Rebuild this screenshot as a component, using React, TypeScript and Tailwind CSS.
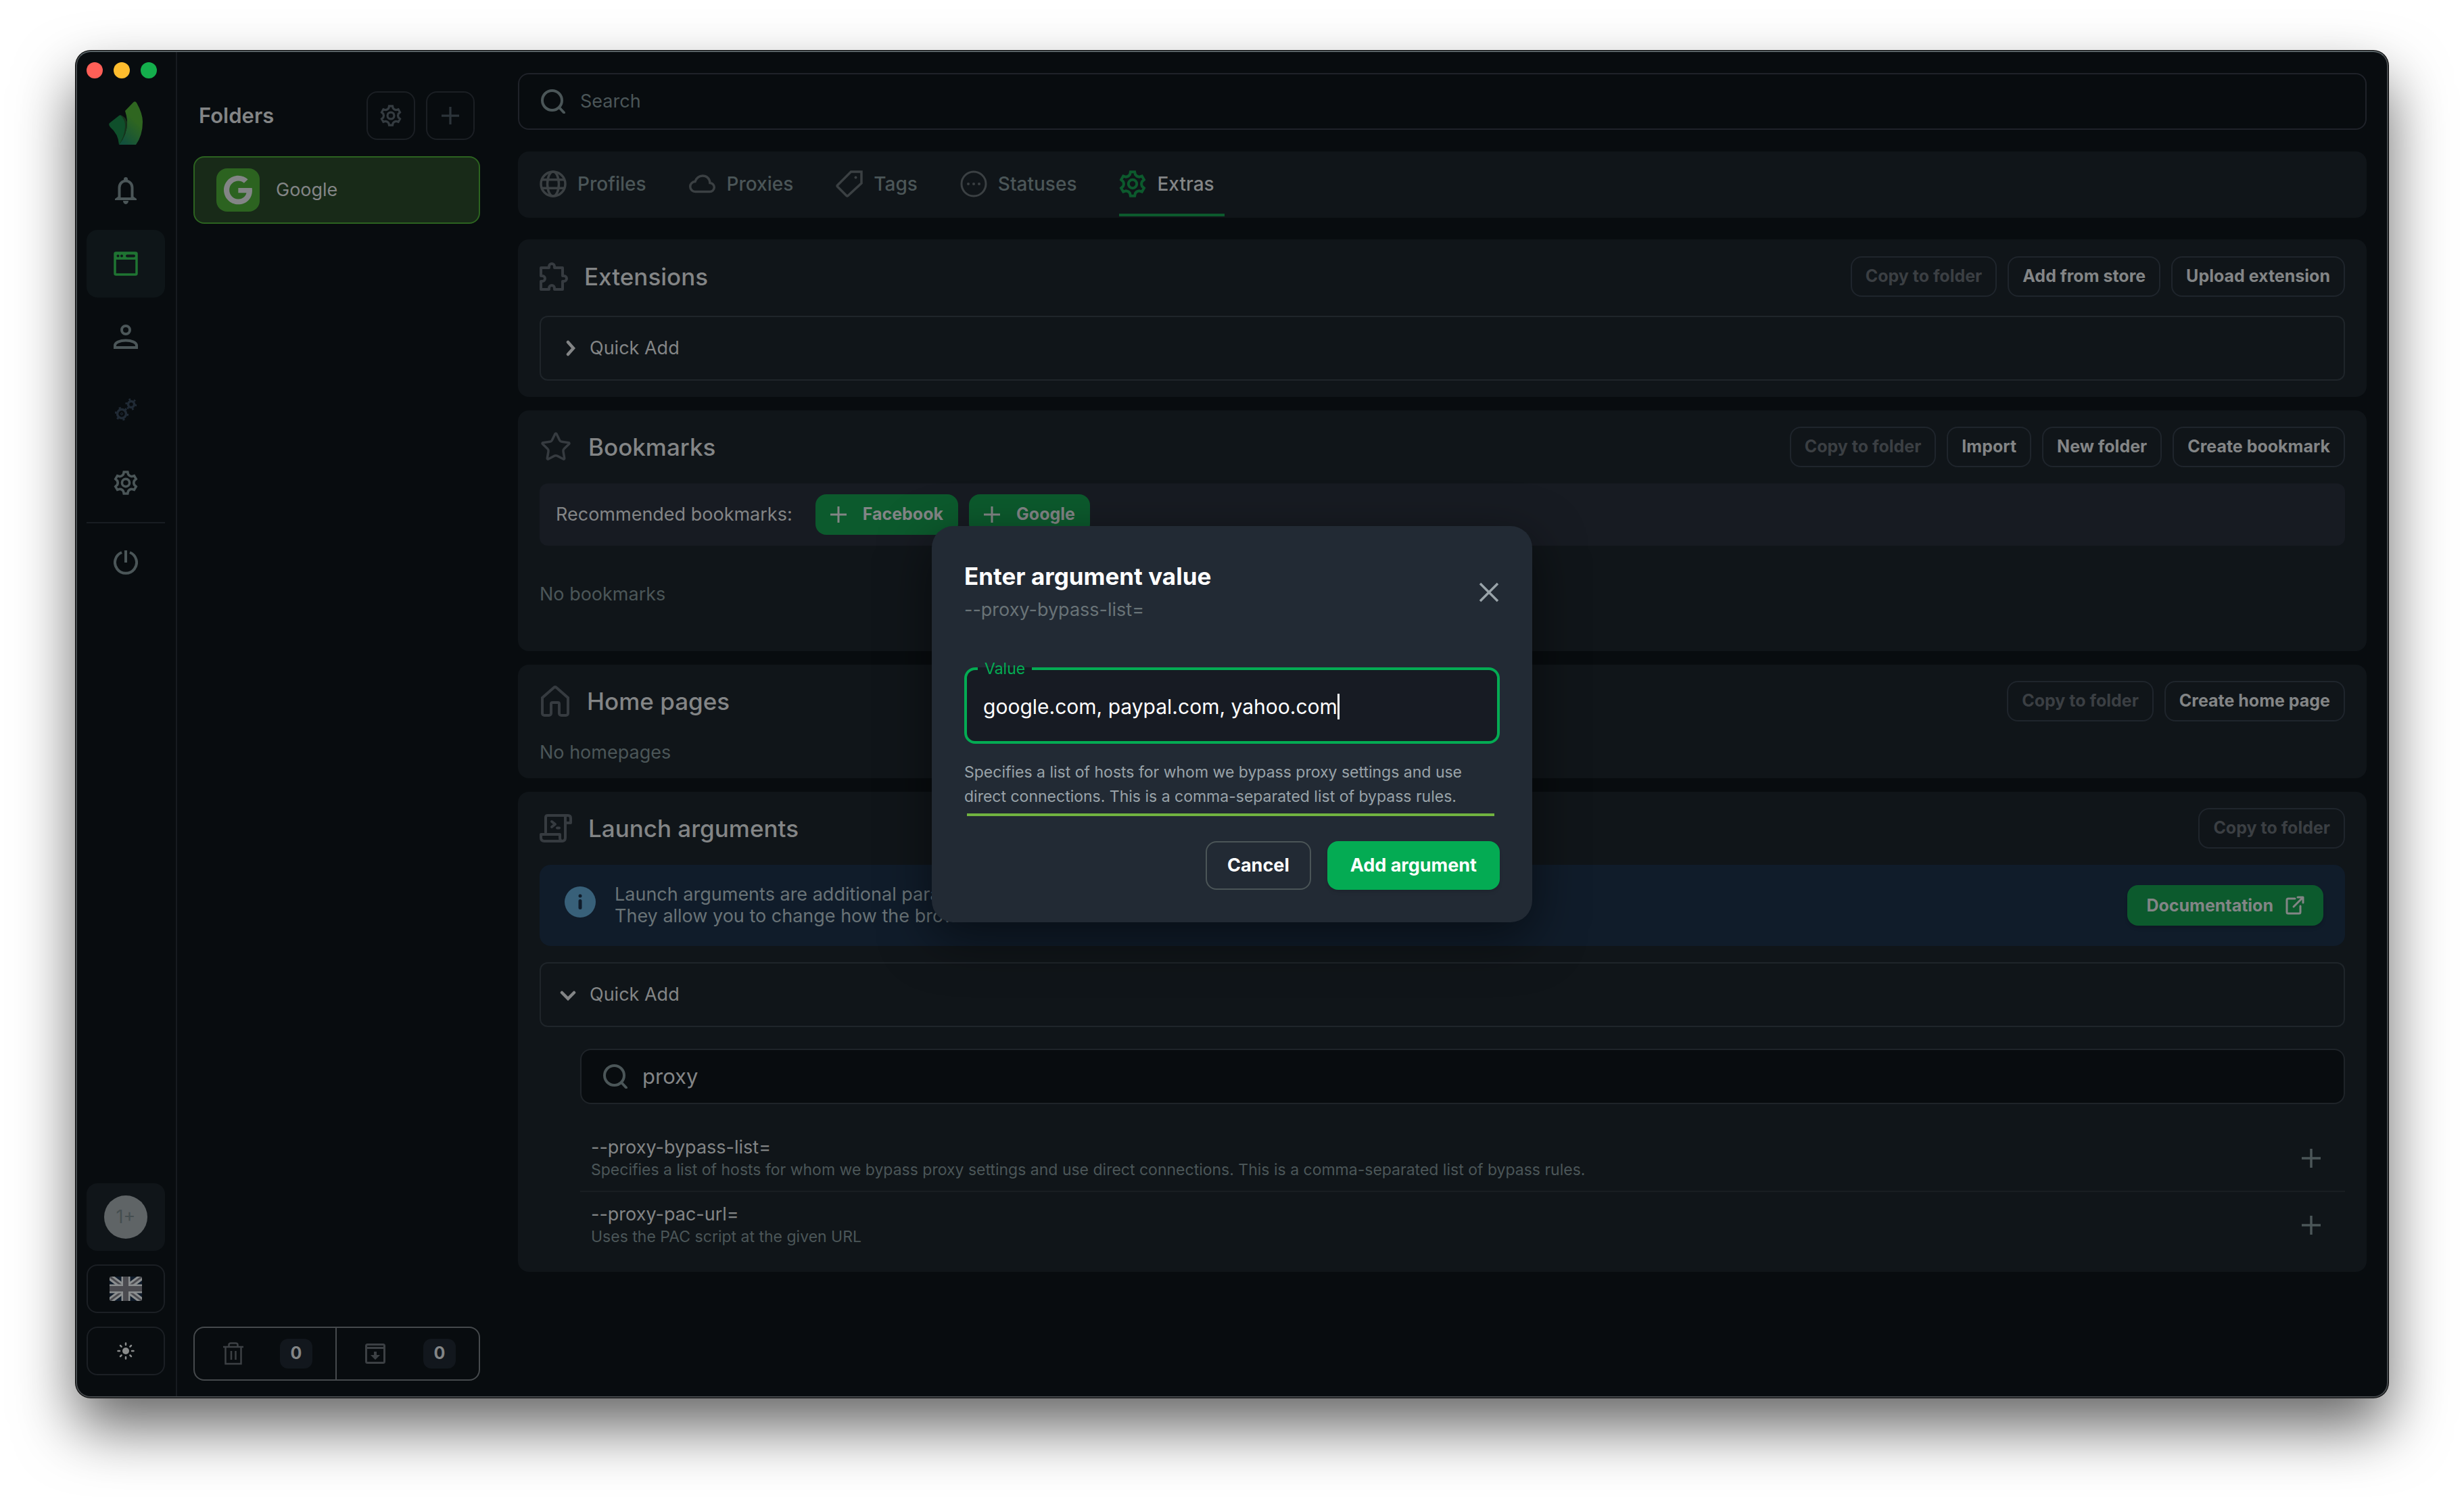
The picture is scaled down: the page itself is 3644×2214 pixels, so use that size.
import { useState } from 'react';
import type { ReactNode } from 'react';
import { FaGoogle } from 'react-icons/fa';
import { Star } from 'lucide-react';
import clsx from 'clsx';

// outline of a six-toothed cog, centred on 0,0
const cogPath = (r: number) => {
  const at = (radius: number, deg: number) => {
    const a = ((deg - 90) * Math.PI) / 180;
    return `${(radius * Math.cos(a)).toFixed(2)} ${(radius * Math.sin(a)).toFixed(2)}`;
  };
  let d = '';
  for (let i = 0; i < 6; i++) {
    const c = i * 60;
    d += `${i === 0 ? 'M' : 'L'}${at(r * 0.8, c - 16)}L${at(r, c - 10)}L${at(r, c + 10)}L${at(r * 0.8, c + 16)}`;
    d += `Q${at(r * 0.68, c + 30)} ${at(r * 0.8, c + 44)}`;
  }
  return d + 'Z';
};

const Cog = ({ className }: { className?: string }) => (
  <svg viewBox="-20 -20 40 40" fill="none" stroke="currentColor" strokeWidth="4" className={className}>
    <path d={cogPath(18)} />
    <circle r="6.2" />
  </svg>
);

const Plus = ({ className }: { className?: string }) => (
  <svg viewBox="0 0 28 28" fill="none" stroke="currentColor" strokeWidth="3.5" className={className}>
    <path d="M14 0v28M0 14h28" />
  </svg>
);

const SearchIcon = () => (
  <svg viewBox="0 0 36 36" fill="none" stroke="currentColor" strokeWidth="4" className="size-9 shrink-0 text-[#4b5658]">
    <circle cx="16.5" cy="16.5" r="14.5" />
    <path d="M27 27l7 7.500" strokeLinecap="round" />
  </svg>
);

const Logo = () => (
  <svg viewBox="0 0 50 64" className="h-16 w-[50px]">
    <defs>
      <linearGradient id="blade" x1="0.8" y1="0" x2="0.3" y2="1">
        <stop offset="0.4" stopColor="#2f6620" />
        <stop offset="1" stopColor="#12503c" />
      </linearGradient>
    </defs>
    <path d="M24 14L36 1.500Q39 -1 41 2Q50 18 50 30Q50 50 40 64H15Q28 48 27 28Q26 20 24 14Z" fill="url(#blade)" />
    <path d="M1 32L15 21Q17 19 20 22Q27 30 26 38Q25 52 15 64Q14 48 2 38Q-1 34 1 32Z" fill="#0f4f2b" />
    <path d="M17 20Q25 28 24 38Q23 52 15 64Q27 50 27 30Q24 22 17 20Z" fill="#17331c" />
  </svg>
);

const Bell = () => (
  <svg viewBox="0 0 32 40" fill="none" stroke="currentColor" strokeWidth="4" className="h-10 w-8">
    <path d="M6.500 30V15.500a9.500 10 0 0 1 19 0V30" />
    <path d="M0 34v-2l5-3.500v1.500h22v-1.500l5 3.500v2z" fill="currentColor" stroke="none" />
    <path d="M16 0a3 3 0 0 1 3 3v4h-6V3a3 3 0 0 1 3-3zM12 35h8a4 5 0 0 1-8 0z" fill="currentColor" stroke="none" />
  </svg>
);

const BrowserIcon = () => (
  <svg viewBox="0 0 36 36" fill="none" className="size-9">
    <rect x="2" y="2" width="32" height="32" rx="1.500" stroke="currentColor" strokeWidth="3.500" />
    <path d="M2 2h32v10H2z" fill="currentColor" />
    <circle cx="6.500" cy="6.500" r="2" fill="#10171a" />
    <circle cx="12" cy="6.500" r="2" fill="#10171a" />
    <rect x="18" y="4.500" width="14" height="4" rx="2" fill="#10171a" />
  </svg>
);

const UserIcon = () => (
  <svg viewBox="0 0 36 36" fill="none" stroke="currentColor" strokeWidth="4" className="size-9">
    <circle cx="18" cy="8" r="6" />
    <path d="M2 34v-3c0-4.500 7-7.500 16-7.500s16 3 16 7.500v3z" />
  </svg>
);

const Cogs = () => (
  <svg viewBox="0 0 32 34" fill="none" stroke="currentColor" strokeWidth="3.500" className="h-[34px] w-8">
    <g transform="translate(10 23)">
      <circle r="6.500" />
      <circle r="1.500" strokeWidth="1" />
      <circle r="8.500" strokeDasharray="3 5.900" />
    </g>
    <g transform="translate(24 9)">
      <circle r="4.500" />
      <circle r="7" strokeDasharray="2.600 4.730" />
    </g>
  </svg>
);

const Power = () => (
  <svg viewBox="0 0 36 36" fill="none" stroke="currentColor" strokeWidth="4" className="size-9">
    <path d="M12 3a16 16 0 1 0 12 0M18 0v18" />
  </svg>
);

const Flag = () => (
  <svg viewBox="0 0 48 36" className="h-9 w-12">
    <defs>
      <clipPath id="flag"><rect width="48" height="36" rx="3" /></clipPath>
    </defs>
    <g clipPath="url(#flag)">
      <path d="M0 0h48v36H0z" fill="#101c2b" />
      <path d="M0 0l48 36M48 0L0 36" stroke="#8b8e8f" strokeWidth="9" />
      <path d="M0 0l48 36M48 0L0 36" stroke="#4b4b50" strokeWidth="3" />
      <path d="M24 0v36M0 18h48" stroke="#8b8e8f" strokeWidth="13" />
      <path d="M24 0v36M0 18h48" stroke="#4b4b50" strokeWidth="8" />
    </g>
  </svg>
);

const Sun = () => (
  <svg viewBox="-13 -13 26 26" stroke="currentColor" strokeWidth="2.500" strokeLinecap="round" className="size-[26px]">
    <circle r="5" fill="currentColor" stroke="none" />
    <path d="M0-11.500v2.500M0 9v2.500M-11.500 0H-9M9 0h2.500M-8-8l1.600 1.600M6.400 6.400L8 8M-8 8l1.600-1.600M6.400-6.400L8-8" />
  </svg>
);

const Trash = () => (
  <svg viewBox="0 0 30 34" fill="none" stroke="currentColor" strokeWidth="2.500" className="h-[34px] w-[30px]">
    <path d="M0 7h30M3.500 7v25h23V7M8.500 6V4q0-2.500 3-2.500h7q3 0 3 2.500v2M12 13v13M18.500 13v13" />
  </svg>
);

const Archive = () => (
  <svg viewBox="0 0 30 30" fill="none" stroke="currentColor" strokeWidth="3" className="size-[30px]">
    <rect x="1.500" y="1.500" width="27" height="27" rx="2" />
    <path d="M2 6.500h26" />
    <path d="M13 12h4v5h5l-7 7-7-7h5z" fill="currentColor" stroke="none" />
  </svg>
);

const Globe = () => (
  <svg viewBox="0 0 40 40" fill="none" stroke="currentColor" strokeWidth="3.500" className="size-10">
    <circle cx="20" cy="20" r="18" />
    <ellipse cx="20" cy="20" rx="8.500" ry="18" />
    <path d="M3 13.700h34M3 26.300h34" />
  </svg>
);

const CloudIcon = () => (
  <svg viewBox="0 0 40 28" fill="none" stroke="currentColor" strokeWidth="3.500" className="h-7 w-10">
    <path d="M9.500 25.500a7.500 7.500 0 0 1-.5-15C10.500 5.500 15 2 20 2c6 0 10.500 4 11 10.500a6.500 6.500 0 0 1-.5 13z" />
  </svg>
);

const TagIcon = () => (
  <svg viewBox="0 0 40 40" fill="none" stroke="currentColor" strokeWidth="3.500" className="size-10">
    <path d="M22.500 2H38v17L18 37.400q-1 1-2 0L2.500 24q-1-1 0-2z" />
    <circle cx="29.500" cy="10.500" r="2" fill="currentColor" stroke="none" />
  </svg>
);

const StatusIcon = () => (
  <svg viewBox="0 0 40 40" fill="none" stroke="currentColor" strokeWidth="3" className="size-10">
    <circle cx="20" cy="20" r="18" />
    <g fill="currentColor" stroke="none">
      <circle cx="12" cy="20" r="2" />
      <circle cx="20" cy="20" r="2" />
      <circle cx="28" cy="20" r="2" />
    </g>
  </svg>
);

const Puzzle = () => (
  <svg viewBox="0 0 42 42" fill="none" stroke="currentColor" strokeWidth="4" strokeLinejoin="round" className="size-[42px]">
    <path d="M2 8h12V6a4 4 0 0 1 8 0v2h12v12h2a4 4 0 0 1 0 8h-2v12H22v-2a4 4 0 0 0-8 0v2H2V28h2a4 4 0 0 0 0-8H2z" />
  </svg>
);

const HomeIcon = () => (
  <svg viewBox="1 0 46 48" fill="none" stroke="currentColor" strokeWidth="4" className="h-12 w-[46px]">
    <path d="M5 19v23a3 3 0 0 0 3 3h7a3 3 0 0 0 3-3V28a2 2 0 0 1 2-2h8a2 2 0 0 1 2 2v14a3 3 0 0 0 3 3h7a3 3 0 0 0 3-3V19L26 4a3 3 0 0 0-4 0z" />
  </svg>
);

const ScriptIcon = () => (
  <svg viewBox="0 0 48 42" fill="none" stroke="currentColor" strokeWidth="4" strokeLinejoin="round" strokeLinecap="round" className="h-[42px] w-12">
    <path d="M9 27V5q0-3 3-3h30q4 0 4 4v7h-8M38 13V4M38 13v22q0 5-5 5H7q-5 0-5-5v-5h28v5q0 5 4 5" />
    <path d="M18 11l5 4-5 4M26 20.500h3" />
  </svg>
);

const ExternalIcon = () => (
  <svg viewBox="0 0 28 28" fill="none" stroke="currentColor" strokeWidth="3" strokeLinecap="round" strokeLinejoin="round" className="size-7">
    <path d="M14 4H4q-2 0-2 2v18q0 2 2 2h16q2 0 2-2V15M18 2h8v8M25 3L12 16" />
  </svg>
);

const NavButton = ({ label, active, className, children }: { label: string; active?: boolean; className?: string; children: ReactNode }) => (
  <button
    aria-label={label}
    className={clsx('flex h-[100px] w-[116px] items-center justify-center rounded-2xl', active ? 'bg-[#0e1518] text-[#1f7432]' : 'text-[#4b5658]', className)}
  >
    {children}
  </button>
);

const SmallButton = ({ children, disabled }: { children: ReactNode; disabled?: boolean }) => (
  <button
    disabled={disabled}
    className="h-[60px] rounded-2xl border-2 border-[#1f252c] px-5 text-[25px] font-bold text-[#838586] disabled:text-[#3b3f43]"
  >
    {children}
  </button>
);

const Panel = ({ icon, title, actions, className, children }: { icon: ReactNode; title: string; actions: ReactNode; className?: string; children: ReactNode }) => (
  <section className={clsx('rounded-2xl bg-[#101519] px-8', className)}>
    <div className="flex h-[60px] items-center justify-between">
      <div className="flex items-center gap-6">
        <span className="text-[#363b40]">{icon}</span>
        <h2 className="text-[35px] font-medium text-[#838586]">{title}</h2>
      </div>
      <div className="flex gap-4">{actions}</div>
    </div>
    {children}
  </section>
);

const QuickAdd = ({ open }: { open?: boolean }) => (
  <button
    aria-expanded={!!open}
    className="flex h-24 w-full items-center gap-5 rounded-xl border-2 border-[#1f252a] px-7 text-[27px] text-[#838586]"
  >
    <svg viewBox="0 0 24 24" fill="none" stroke="currentColor" strokeWidth="4.500" strokeLinecap="round" className="size-6">
      {open ? <path d="M3 9l9 9 9-9" /> : <path d="M12 3l8 9-8 9" />}
    </svg>
    Quick Add
  </button>
);

const tabs = [
  { label: 'Profiles', icon: <Globe /> },
  { label: 'Proxies', icon: <CloudIcon /> },
  { label: 'Tags', icon: <TagIcon /> },
  { label: 'Statuses', icon: <StatusIcon /> },
  { label: 'Extras', icon: <Cog className="size-10" />, active: true },
];

const launchArgs = [
  {
    name: '--proxy-bypass-list=',
    description:
      'Specifies a list of hosts for whom we bypass proxy settings and use direct connections. This is a comma-separated list of bypass rules.',
  },
  { name: '--proxy-pac-url=', description: 'Uses the PAC script at the given URL' },
];

const Sidebar = () => (
  <nav className="flex w-[148px] shrink-0 flex-col items-start border-r-2 border-[#171b20] pt-[15px] pb-[31px] pl-[14px]">
    <div className="flex gap-4">
      <span className="size-6 rounded-full bg-[#ff5f57]" />
      <span className="size-6 rounded-full bg-[#febc2e]" />
      <span className="size-6 rounded-full bg-[#14ae4c]" />
    </div>
    <div className="mt-[34px] flex w-[116px] justify-center">
      <Logo />
    </div>
    <div className="mt-[18px] flex flex-col gap-2">
      <NavButton label="Notifications"><Bell /></NavButton>
      <NavButton label="Browser profiles" active><BrowserIcon /></NavButton>
      <NavButton label="Users"><UserIcon /></NavButton>
      <NavButton label="Automation"><span className="text-[#202a35]"><Cogs /></span></NavButton>
      <NavButton label="Settings"><Cog className="size-9" /></NavButton>
      <hr className="border-t-2 border-[#181d22]" />
      <NavButton label="Log out"><Power /></NavButton>
    </div>
    <div className="mt-auto flex flex-col gap-5">
      <NavButton label="Accounts" className="bg-[#101519]">
        <span className="flex size-16 items-center justify-center rounded-full bg-[#5f6466] text-[27px] text-[#454e50]">1+</span>
      </NavButton>
      <button aria-label="Language" className="flex h-[72px] items-center justify-center rounded-2xl border-2 border-[#1b1f24]">
        <Flag />
      </button>
      <button aria-label="Theme" className="flex h-[72px] items-center justify-center rounded-2xl border-2 border-[#1b1f24] text-[#8a8c8c]">
        <Sun />
      </button>
    </div>
  </nav>
);

const Folders = () => (
  <aside className="flex w-[448px] shrink-0 flex-col pt-[58px] pb-[23px] pl-6">
    <div className="flex items-center justify-between pr-2 pl-2">
      <h2 className="text-[31px] font-semibold text-[#838586]">Folders</h2>
      <div className="flex gap-4">
        <button aria-label="Folder settings" className="flex size-[72px] items-center justify-center rounded-2xl border-2 border-[#1b1f24] text-[#343b40]">
          <Cog className="size-8" />
        </button>
        <button aria-label="Add folder" className="flex size-[72px] items-center justify-center rounded-2xl border-2 border-[#1b1f24] text-[#2c343a]">
          <Plus className="size-[26px]" />
        </button>
      </div>
    </div>
    <button className="mt-6 flex h-[100px] items-center gap-6 rounded-2xl border-2 border-[#2c6320] bg-[#182a18] px-8 text-[27px] text-[#838586]">
      <span className="flex size-16 items-center justify-center rounded-2xl bg-[#2c6320]">
        <FaGoogle className="size-11" />
      </span>
      Google
    </button>
    <div className="mt-auto grid h-20 grid-cols-2 divide-x-2 divide-[#45494c] rounded-2xl border-2 border-[#45494c] text-[#3c4044]">
      <button aria-label="Trash" className="flex items-center justify-between pr-[34px] pl-[42px]">
        <Trash />
        <span className="flex h-11 w-12 items-center justify-center rounded-xl bg-[#12171d] text-[25px] font-bold text-[#838586]">0</span>
      </button>
      <button aria-label="Archive" className="flex items-center justify-between pr-[34px] pl-[42px]">
        <Archive />
        <span className="flex h-11 w-12 items-center justify-center rounded-xl bg-[#12171d] text-[25px] font-bold text-[#838586]">0</span>
      </button>
    </div>
  </aside>
);

const ArgumentDialog = () => {
  const [value, setValue] = useState('google.com, paypal.com, yahoo.com');

  return (
    <div className="absolute inset-0 flex items-center justify-center">
      <div
        role="dialog"
        aria-labelledby="dialog-title"
        className="w-[888px] rounded-[32px] bg-[#222a34] px-12 pt-[52px] pb-12 shadow-[0_22px_76px_rgba(0,0,0,0.5)]"
      >
        <div className="flex items-center justify-between">
          <div>
            <h1 id="dialog-title" className="text-[35px] leading-[44px] font-bold text-white">Enter argument value</h1>
            <p className="mt-2 text-[27px] leading-10 text-[#697377]">--proxy-bypass-list=</p>
          </div>
          <button aria-label="Close" className="text-[#99a3a9]">
            <svg viewBox="0 0 32 32" fill="none" stroke="currentColor" strokeWidth="3.500" className="size-8">
              <path d="M3 3l26 26M29 3L3 29" />
            </svg>
          </button>
        </div>
        <fieldset className="mt-[53px] rounded-2xl border-4 border-[#04ab53] bg-[#171b23] px-4 pb-[9px]">
          <legend className="px-[10px] text-[23px] leading-7 text-[#04ab53]">
            <label htmlFor="arg-value">Value</label>
          </legend>
          <div className="flex h-[84px] items-center pl-2">
            <input
              id="arg-value"
              value={value}
              onChange={(e) => setValue(e.target.value)}
              className="field-sizing-content bg-transparent text-[30px] text-white outline-none"
            />
            <span className="h-[38px] w-[3px] bg-white" />
          </div>
        </fieldset>
        <p className="mt-6 text-[23px] leading-9 text-[#99a3a9]">
          Specifies a list of hosts for whom we bypass proxy settings and use direct connections. This is a comma-separated list of bypass rules.
        </p>
        <div className="mr-2 ml-1 mt-[7px] h-1 bg-[#71b340]" />
        <div className="mt-[37px] flex justify-end gap-6">
          <button className="h-[72px] rounded-2xl border-2 border-[#4b5557] px-[30px] text-[27px] font-bold text-white">Cancel</button>
          <button className="h-[72px] rounded-2xl bg-[#04ab53] px-[34px] text-[27px] font-bold text-white shadow-md">Add argument</button>
        </div>
      </div>
    </div>
  );
};

export default function App() {
  const [query, setQuery] = useState('proxy');

  return (
    <div className="flex min-h-screen bg-white px-28 pt-[75px] pb-[147px] font-['Inter','Liberation_Sans',sans-serif]">
      <div className="relative flex flex-1 rounded-[22px] border-2 border-[#45494c] border-t-[#596366] bg-[#080c0f] shadow-[0_0_0_1px_#000,0_44px_88px_rgba(0,0,0,0.6)]">
        <Sidebar />
        <Folders />
        <main className="min-w-0 flex-1 pt-[31px] pr-[30px] pb-8 pl-14">
          <div className="flex h-[84px] items-center gap-[22px] rounded-2xl border-2 border-[#1f2229] px-8">
            <SearchIcon />
            <input
              aria-label="Search"
              placeholder="Search"
              className="min-w-0 flex-1 bg-transparent text-[27px] text-[#838586] outline-none placeholder:text-[#4b5658]"
            />
          </div>

          <div className="mt-8 flex h-[98px] gap-12 rounded-2xl bg-[#101519] px-8">
            {tabs.map((tab) => (
              <button
                key={tab.label}
                className={clsx(
                  'flex h-24 items-center gap-4 border-b-4 pt-1 pr-[15px] text-[28px] font-medium',
                  tab.active ? 'border-[#0c5a2d] text-[#838586]' : 'border-transparent text-[#4b5658]',
                )}
              >
                <span className={tab.active ? 'text-[#0c5a2d]' : 'text-[#3b4043]'}>{tab.icon}</span>
                {tab.label}
              </button>
            ))}
          </div>

          <div className="mt-8 flex flex-col gap-5">
            <Panel
              icon={<Puzzle />}
              title="Extensions"
              className="pt-[25px] pb-6"
              actions={
                <>
                  <SmallButton disabled>Copy to folder</SmallButton>
                  <SmallButton>Add from store</SmallButton>
                  <SmallButton>Upload extension</SmallButton>
                </>
              }
            >
              <div className="mt-7">
                <QuickAdd />
              </div>
            </Panel>

            <Panel
              icon={<Star className="size-12" strokeWidth={1.75} />}
              title="Bookmarks"
              className="pt-6 pb-[66px]"
              actions={
                <>
                  <SmallButton disabled>Copy to folder</SmallButton>
                  <SmallButton>Import</SmallButton>
                  <SmallButton>New folder</SmallButton>
                  <SmallButton>Create bookmark</SmallButton>
                </>
              }
            >
              <div className="mt-6 flex h-[92px] items-center rounded-xl bg-[#171b22] px-6 text-[27px] text-[#838586]">
                <span className="mr-[34px]">Recommended bookmarks:</span>
                <div className="flex gap-4">
                  {['Facebook', 'Google'].map((name) => (
                    <button key={name} className="flex h-[60px] items-center gap-6 rounded-2xl bg-[#0c5a2d] px-[22px] text-[25px] font-bold">
                      <Plus className="size-6" />
                      {name}
                    </button>
                  ))}
                </div>
              </div>
              <p className="mt-[54px] text-[27px] leading-9 text-[#4b5658]">No bookmarks</p>
            </Panel>

            <Panel
              icon={<HomeIcon />}
              title="Home pages"
              className="pt-6 pb-5"
              actions={
                <>
                  <SmallButton disabled>Copy to folder</SmallButton>
                  <SmallButton>Create home page</SmallButton>
                </>
              }
            >
              <p className="mt-7 text-[27px] leading-9 text-[#4b5658]">No homepages</p>
            </Panel>

            <Panel icon={<ScriptIcon />} title="Launch arguments" className="pt-6 pb-5" actions={<SmallButton disabled>Copy to folder</SmallButton>}>
              <div className="mt-6 flex h-[120px] items-center rounded-2xl bg-[#101c2a] pr-8 pl-[37px] text-[27px] leading-8 text-[#697377]">
                <svg viewBox="0 0 46 46" className="mt-8 mr-7 size-[46px] shrink-0 self-start">
                  <circle cx="23" cy="23" r="23" fill="#386079" />
                  <circle cx="23" cy="14" r="2.500" fill="#101c2a" />
                  <rect x="20.500" y="19" width="5" height="15" rx="2.500" fill="#101c2a" />
                </svg>
                <p>
                  Launch arguments are additional parameters passed to the browser.
                  <br />
                  They allow you to change how the browser behaves.
                </p>
                <a href="#documentation" className="ml-auto flex h-[60px] items-center gap-[18px] rounded-2xl bg-[#0c5a2d] px-7 text-[25px] font-bold text-[#838586] shadow-md">
                  Documentation
                  <ExternalIcon />
                </a>
              </div>
              <div className="mt-6">
                <QuickAdd open />
              </div>
              <div className="mt-8 ml-[60px]">
                <div className="flex h-[82px] items-center gap-[22px] rounded-2xl border-2 border-[#1f2429] bg-[#080c0f] px-8">
                  <SearchIcon />
                  <input
                    aria-label="Search arguments"
                    value={query}
                    onChange={(e) => setQuery(e.target.value)}
                    className="min-w-0 flex-1 bg-transparent text-[31px] text-[#838586] outline-none"
                  />
                </div>
                <ul className="mt-8 divide-y-2 divide-[#191e22]">
                  {launchArgs.map((arg) => (
                    <li key={arg.name} className="flex h-[98px] items-center justify-between pr-9 pl-4">
                      <div>
                        <p className="text-[27px] leading-[34px] text-[#838586]">{arg.name}</p>
                        <p className="text-[23px] leading-8 text-[#4b5658]">{arg.description}</p>
                      </div>
                      <button aria-label={`Add ${arg.name}`} className="text-[#4b5658]">
                        <Plus className="size-7" />
                      </button>
                    </li>
                  ))}
                </ul>
              </div>
            </Panel>
          </div>
        </main>
        <ArgumentDialog />
      </div>
    </div>
  );
}
